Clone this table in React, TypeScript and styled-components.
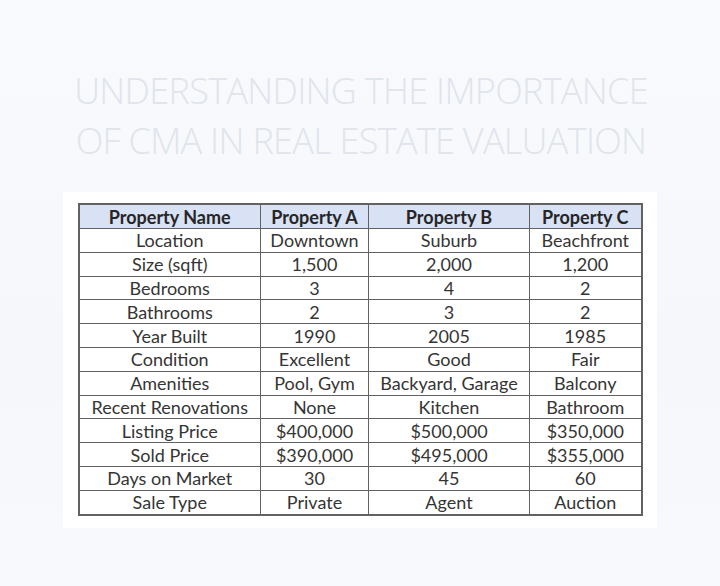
import styled, { createGlobalStyle } from 'styled-components'

const GlobalStyle = createGlobalStyle`
  html, body {
    margin: 0;
    padding: 0;
    background: #f8f9fc;
  }
`

const headers = ['Property Name', 'Property A', 'Property B', 'Property C']

const rows = [
  ['Location', 'Downtown', 'Suburb', 'Beachfront'],
  ['Size (sqft)', '1,500', '2,000', '1,200'],
  ['Bedrooms', '3', '4', '2'],
  ['Bathrooms', '2', '3', '2'],
  ['Year Built', '1990', '2005', '1985'],
  ['Condition', 'Excellent', 'Good', 'Fair'],
  ['Amenities', 'Pool, Gym', 'Backyard, Garage', 'Balcony'],
  ['Recent Renovations', 'None', 'Kitchen', 'Bathroom'],
  ['Listing Price', '$400,000', '$500,000', '$350,000'],
  ['Sold Price', '$390,000', '$495,000', '$355,000'],
  ['Days on Market', '30', '45', '60'],
  ['Sale Type', 'Private', 'Agent', 'Auction'],
]

const colWidths = [182, 108, 161, 112]

export default function App() {
  return (
    <Page>
      <GlobalStyle />
      <Title>
        UNDERSTANDING THE IMPORTANCE
        <br />
        OF CMA IN REAL ESTATE VALUATION
      </Title>
      <Card>
        <Sheet>
          <colgroup>
            {colWidths.map((w, i) => (
              <col key={i} style={{ width: w }} />
            ))}
          </colgroup>
          <thead>
            <tr>
              {headers.map((h) => (
                <HeadCell key={h}>{h}</HeadCell>
              ))}
            </tr>
          </thead>
          <tbody>
            {rows.map((r) => (
              <tr key={r[0]}>
                {r.map((c, i) => (
                  <Cell key={i}>{c}</Cell>
                ))}
              </tr>
            ))}
          </tbody>
        </Sheet>
      </Card>
    </Page>
  )
}

const Page = styled.div`
  width: 720px;
  height: 586px;
  box-sizing: border-box;
  padding-top: 66px;
  display: flex;
  flex-direction: column;
  align-items: center;
  background: linear-gradient(180deg, #f9fafd 0%, #f5f7fb 60%, #f8f9fc 100%);
  overflow: hidden;
`

const Title = styled.h1`
  margin: 0 0 26px;
  padding-left: 2px;
  font-family: 'Open Sans', sans-serif;
  font-weight: 300;
  font-size: 36px;
  line-height: 50px;
  letter-spacing: -0.7px;
  color: #e0e4eb;
  text-align: center;
`

const Card = styled.div`
  background: #ffffff;
  padding: 11px 14px 12px 15px;
  margin-left: -1px;
`

const Sheet = styled.table`
  table-layout: fixed;
  border-collapse: collapse;
  width: 563px;
  font-family: Lato, sans-serif;
  font-size: 18px;
  color: #353535;
  border: 2px solid #626262;
`

const HeadCell = styled.th`
  height: 23px;
  padding: 0;
  background: #d9e1f4;
  border: 1.5px solid #626262;
  font-weight: 700;
  color: #262626;
  text-align: center;
  white-space: nowrap;
  line-height: 18px;
`

const Cell = styled.td`
  height: 22.8px;
  padding: 0;
  border: 1.5px solid #626262;
  text-align: center;
  white-space: nowrap;
  line-height: 18px;
`
